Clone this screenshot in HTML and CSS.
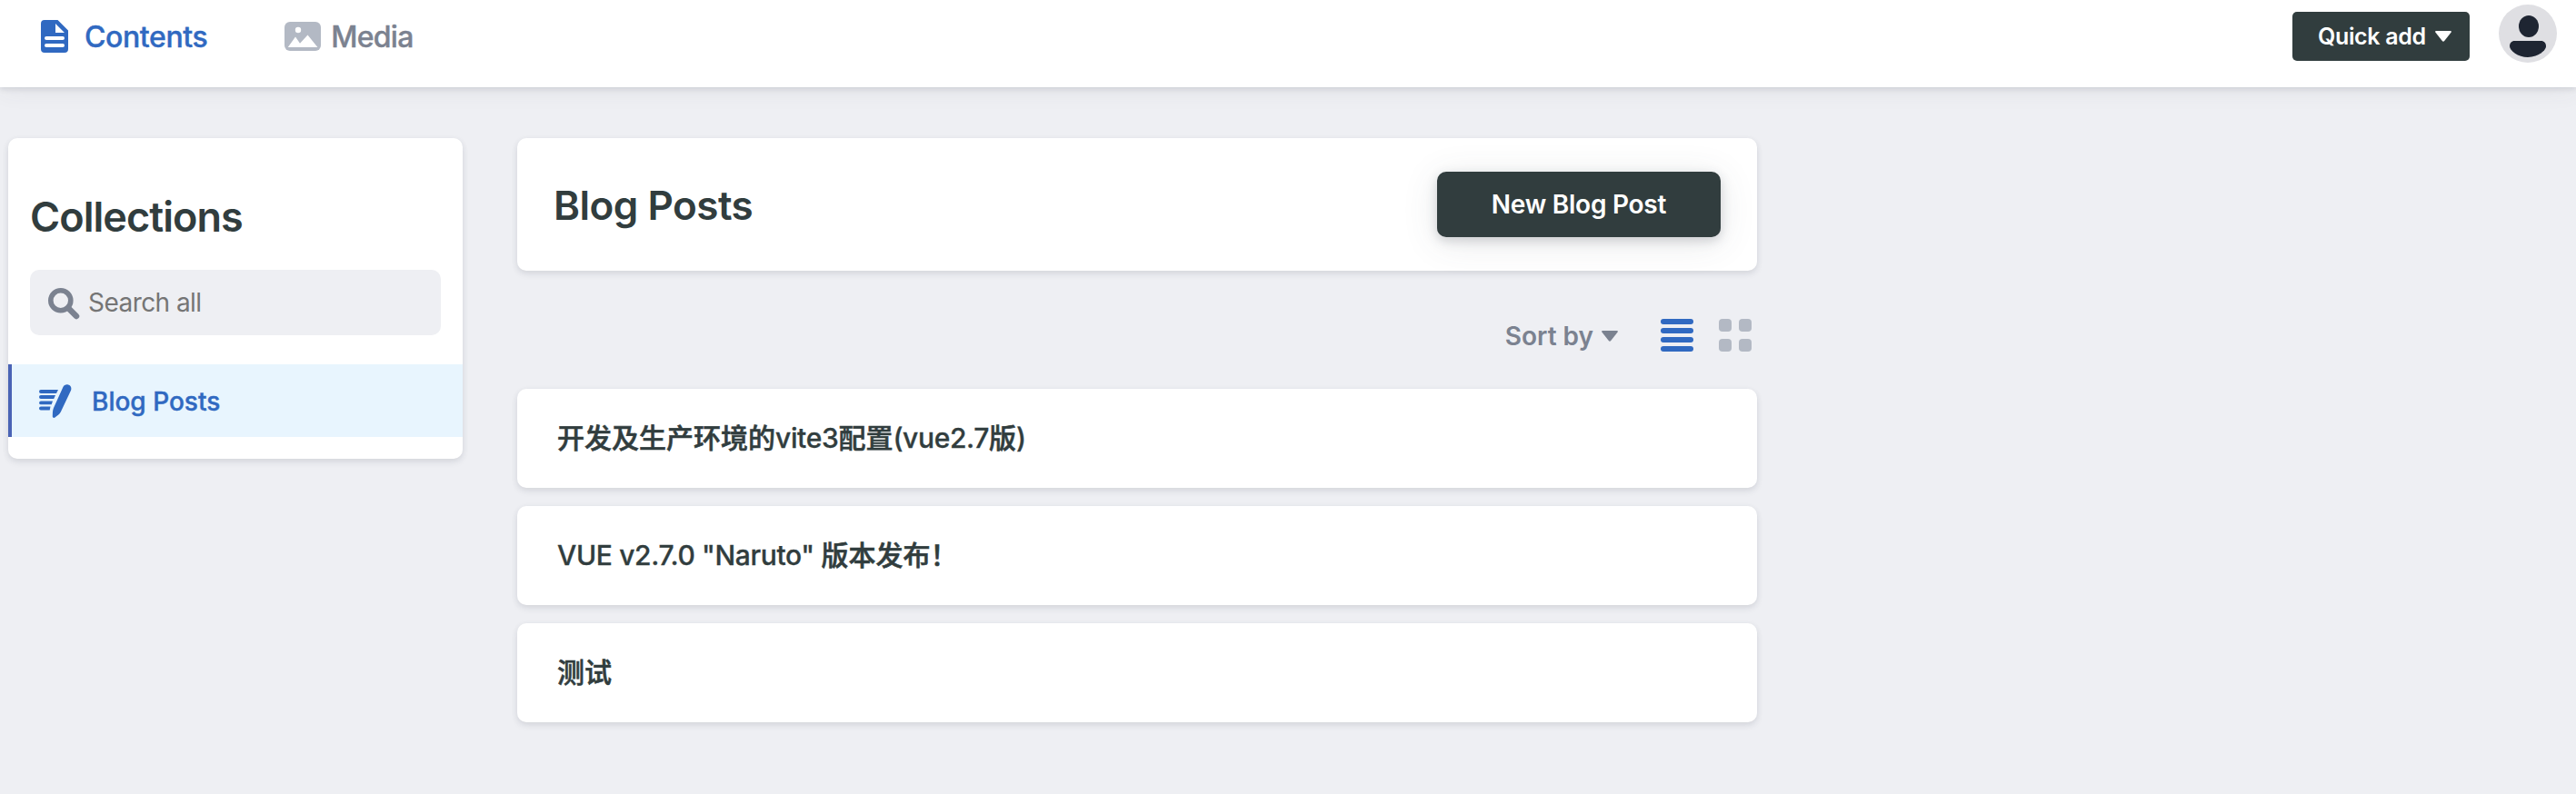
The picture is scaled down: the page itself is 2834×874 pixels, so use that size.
FILE: index.html
```
<!DOCTYPE html>
<html lang="zh-CN">
<head>
<meta charset="utf-8">
<title>Contents</title>
<link rel="stylesheet" href="styles.css">
</head>
<body>
<header class="app-header">
  <nav class="app-nav">
    <a class="nav-tab nav-tab-active">
      <svg class="icon-page" width="30" height="36" viewBox="0 0 30 36"><path fill="currentColor" fill-rule="evenodd" d="M4 0H18.5L30 11.5V32a4 4 0 0 1-4 4H4a4 4 0 0 1-4-4V4a4 4 0 0 1 4-4ZM16 4V14H26ZM6 18a2 2 0 0 0 0 4H24a2 2 0 0 0 0-4ZM6 26a2 2 0 0 0 0 4H24a2 2 0 0 0 0-4Z"/></svg>
      <span class="tab-contents">Contents</span>
    </a>
    <a class="nav-tab">
      <svg class="icon-media" width="40" height="32" viewBox="0 0 40 32"><rect width="40" height="32" rx="6" fill="#b3b9c4"/><g fill="#fff"><circle cx="15" cy="9" r="3.2"/><path d="M3.8 28L12 16.6L17 23.8L25.5 14.5L36.4 28Z"/></g></svg>
      <span class="tab-media">Media</span>
    </a>
  </nav>
  <div class="app-actions">
    <button class="quick-add"><span>Quick add</span><svg width="18" height="12" viewBox="0 0 18 12"><path fill="currentColor" d="M1.2 0H16.8Q18.6.2 17.5 1.8L10.2 11Q9 12.4 7.8 11L.5 1.8Q-.6.2 1.2 0Z"/></svg></button>
    <svg class="avatar" width="64" height="64" viewBox="0 0 64 64"><circle cx="32" cy="32" r="32" fill="#dfdfe3"/><g fill="#1e2532"><ellipse cx="33" cy="24" rx="11" ry="12"/><path d="M17.5 40H46.5C50 40 52 42.5 52 46C52 50.500 43 58 32 58C21 58 12 50.500 12 46C12 42.500 14 40 17.500 40Z"/></g></svg>
  </div>
</header>
<div class="layout">
  <aside class="card sidebar">
    <h2 class="sidebar-title">Collections</h2>
    <div class="search">
      <svg width="35" height="35" viewBox="0 0 35 35" fill="none" stroke="currentColor"><circle cx="13.800" cy="13.800" r="11" stroke-width="5.600"/><path d="M22 22L31 31" stroke-width="6.500" stroke-linecap="round"/></svg>
      <span>Search all</span>
    </div>
    <a class="collection">
      <svg width="36" height="37" viewBox="0 0 36 37" fill="currentColor"><path d="M2 6H21L19 10H2A2 2 0 0 1 2 6ZM2 12H18L16.200 16H2A2 2 0 0 1 2 12ZM2 18.500H15L13.700 22.300H2A1.900 1.900 0 0 1 2 18.500ZM2 24.500H12.500L11.700 28.500H2A2 2 0 0 1 2 24.500Z"/><path d="M26.300 3.200C27.500.6 30 0 32 .5C35 1.300 36.100 4 34.900 7L23.800 30.600C22.500 33.300 20 34.600 17.500 36.600C16.200 37.400 14.700 36.600 14.800 35.200C15 32 14.700 29 16 26Z"/></svg>
      <span>Blog Posts</span>
    </a>
  </aside>
  <main class="main">
    <section class="card collection-top">
      <h1>Blog Posts</h1>
      <a class="new-post">New Blog Post</a>
    </section>
    <div class="controls">
      <button class="sort"><span>Sort by</span><svg width="18" height="12" viewBox="0 0 18 12"><path fill="currentColor" d="M1.2 0H16.8Q18.6.2 17.5 1.8L10.2 11Q9 12.4 7.8 11L.5 1.8Q-.6.2 1.2 0Z"/></svg></button>
      <svg class="view-list" width="36" height="36" viewBox="0 0 36 36" fill="currentColor"><rect width="36" height="6" rx="3"/><rect y="10" width="36" height="6" rx="3"/><rect y="20" width="36" height="6" rx="3"/><rect y="30" width="36" height="6" rx="3"/></svg>
      <svg class="view-grid" width="36" height="36" viewBox="0 0 36 36" fill="currentColor"><rect width="14" height="14" rx="4"/><rect x="22" width="14" height="14" rx="4"/><rect y="22" width="14" height="14" rx="4"/><rect x="22" y="22" width="14" height="14" rx="4"/></svg>
    </div>
    <ul class="entries">
      <li class="card entry">开发及生产环境的<span class="latin">vite3</span>配置<span class="latin">(vue2.7</span>版<span class="latin">)</span></li>
      <li class="card entry"><span class="latin">VUE v2.7.0 "Naruto" </span>版本发布！</li>
      <li class="card entry">测试</li>
    </ul>
  </main>
</div>
</body>
</html>
```
FILE: styles.css
```
* { box-sizing: border-box; }

body {
  margin: 0;
  min-height: 874px;
  background: #eeeff3;
  color: #313d3e;
  font-family: Inter, "Noto Sans CJK SC", sans-serif;
}

svg { display: block; flex: none; }
h1, h2, ul { margin: 0; padding: 0; }
button { border: 0; margin: 0; background: none; font-family: inherit; }

.app-header {
  display: flex;
  justify-content: space-between;
  height: 96px;
  padding: 0 21px 0 45px;
  background: #fff;
  box-shadow: 0 4px 24px rgba(68, 74, 87, .07), 0 2px 6px rgba(68, 74, 87, .15);
}

.app-nav { display: flex; height: 80px; gap: 85px; }

.nav-tab {
  display: flex;
  align-items: center;
  color: #7b8290;
  font-size: 32px;
  font-weight: 500;
  line-height: 40px;
  -webkit-text-stroke: .4px;
}
.nav-tab span { padding-top: 1px; }
.nav-tab-active { color: #3069c1; }
.icon-page { margin-right: 18px; }
.icon-media { margin-right: 11px; }
.tab-contents { letter-spacing: -.4px; }
.tab-media { letter-spacing: -.75px; }

.app-actions { display: flex; align-items: flex-start; gap: 32px; }

.quick-add {
  display: flex;
  align-items: center;
  gap: 10px;
  width: 195px;
  height: 54px;
  margin-top: 13px;
  padding: 0 0 0 28px;
  border-radius: 5px;
  background: #313d3e;
  color: #fff;
  font-size: 25px;
  font-weight: 600;
  letter-spacing: -.35px;
}
.avatar { margin-top: 5px; }

.layout {
  display: flex;
  align-items: flex-start;
  gap: 60px;
  padding: 56px 0 0 9px;
}

.card {
  border-radius: 10px;
  background: #fff;
  box-shadow: 0 4px 8px rgba(68, 74, 87, .06), 0 2px 6px rgba(68, 74, 87, .11);
}

.sidebar { width: 500px; height: 353px; padding-top: 61px; }

.sidebar-title {
  margin: 0 24px 33px;
  font-size: 45px;
  font-weight: 600;
  line-height: 51px;
  letter-spacing: -.95px;
}

.search {
  display: flex;
  align-items: center;
  gap: 9px;
  height: 72px;
  margin: 0 24px 32px;
  padding-left: 20px;
  border-radius: 10px;
  background: #eeeff3;
  color: #7b8290;
  font-size: 28px;
  letter-spacing: -.55px;
}
.search svg { margin-top: 2px; }
.search span { color: #757575; }

.collection {
  display: flex;
  align-items: center;
  gap: 22px;
  height: 80px;
  padding-left: 30px;
  border-left: 4px solid #4a63b5;
  background: #e8f5fe;
  color: #3069c1;
  font-size: 28px;
  font-weight: 500;
  -webkit-text-stroke: .4px;
}
.collection span { padding-top: 2px; }

.main { width: 1364px; }

.collection-top {
  display: flex;
  align-items: center;
  justify-content: space-between;
  height: 146px;
  padding: 0 40px;
}
.collection-top h1 {
  padding-top: 2px;
  font-size: 44px;
  font-weight: 600;
  letter-spacing: -.5px;
}

.new-post {
  display: flex;
  align-items: center;
  justify-content: center;
  width: 312px;
  height: 72px;
  border-radius: 10px;
  background: #313d3e;
  box-shadow: 0 4px 12px rgba(68, 74, 87, .22), 0 6px 38px rgba(68, 74, 87, .13);
  color: #fff;
  font-size: 28px;
  font-weight: 600;
  letter-spacing: -.25px;
}

.controls {
  display: flex;
  align-items: center;
  justify-content: flex-end;
  height: 130px;
  padding: 0 6px 0 0;
}
.controls svg { margin-top: 12px; }
.controls .sort {
  display: flex;
  align-items: center;
  gap: 10px;
  margin: 12px 47px 0 0;
  padding: 0;
  color: #7b8290;
  font-size: 28px;
  font-weight: 600;
}
.controls .sort span { margin-right: -1px; padding-top: 1px; }
.controls .sort svg { margin-top: 2px; }
.view-list { margin-right: 28px; color: #3069c1; }
.view-grid { color: #b3b9c4; }

.entries { display: grid; gap: 20px; list-style: none; }

.entry {
  height: 109px;
  padding: 0 44px;
  font-size: 30px;
  font-weight: 500;
  line-height: 109px;
  -webkit-text-stroke: .6px;
}
.latin { letter-spacing: -.35px; -webkit-text-stroke: .3px; }
```
